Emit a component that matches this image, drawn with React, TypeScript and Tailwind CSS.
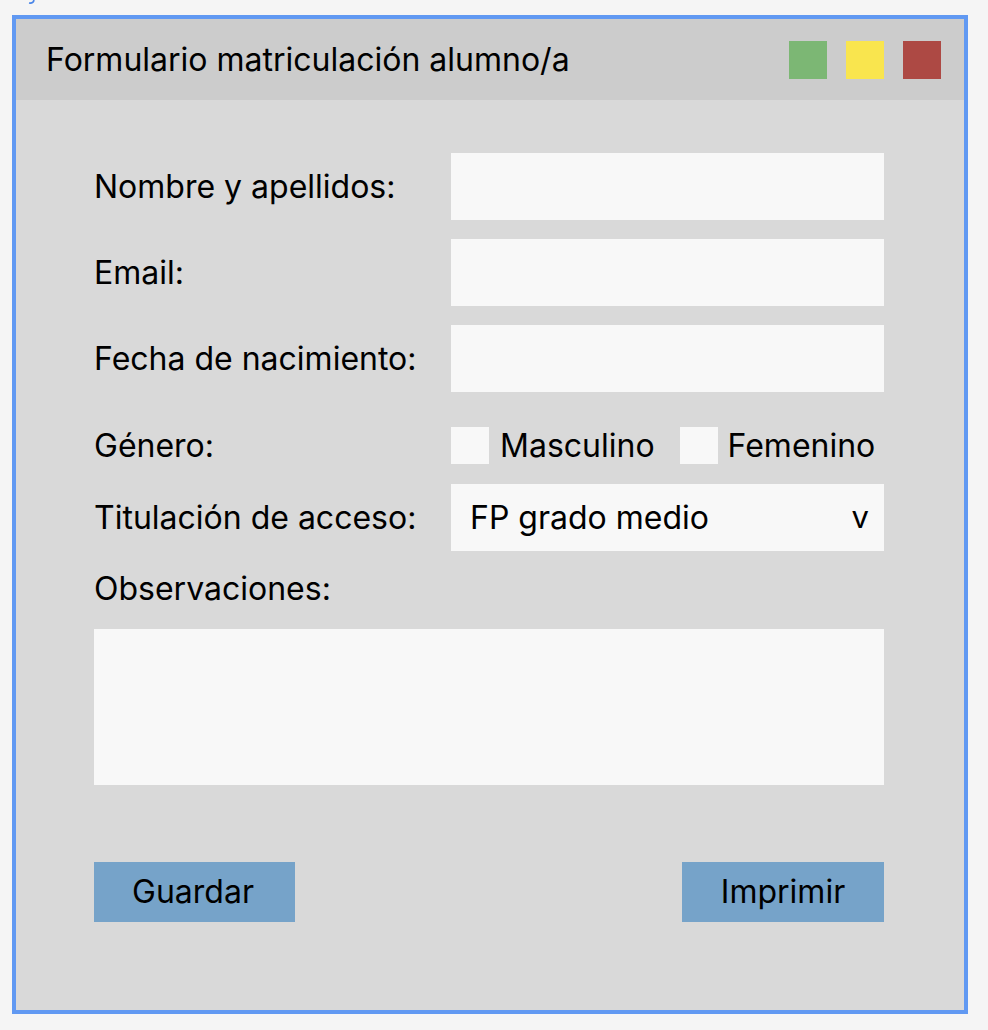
export default function App() {
  return (
    <div className="min-h-screen w-full bg-[#f5f5f5] font-['Inter','Noto_Sans',sans-serif] text-black">
      <div className="h-[15px] pl-[27px]">
        <svg width="8" height="5" viewBox="0 0 8 5" className="block">
          <path d="M7 0 C6.5 2.5 5 3.5 2 3" fill="none" stroke="#4a86e8" strokeWidth="1.6" />
        </svg>
      </div>
      <div className="ml-[12px] flex h-[999px] w-[956px] flex-col border-4 border-[#6199f2] bg-[#d9d9d9]">
        {/* Title bar */}
        <div className="flex h-[81px] shrink-0 items-center justify-between bg-[#cccccc] pl-[30px] pr-[23px]">
          <span className="text-[32px] leading-none">Formulario matriculación alumno/a</span>
          <div className="flex items-center gap-[19px]">
            <span className="h-[38px] w-[38px] bg-[#7cb774]" />
            <span className="h-[38px] w-[38px] bg-[#f9e54e]" />
            <span className="h-[38px] w-[38px] bg-[#ad4944]" />
          </div>
        </div>

        {/* Body */}
        <div className="flex flex-col pl-[78px] pr-[80px] pt-[53px] text-[32px]">
          <div className="flex flex-col gap-[19px]">
            <Row label="Nombre y apellidos:" />
            <Row label="Email:" />
            <Row label="Fecha de nacimiento:" />
          </div>

          <div className="mt-[35px] flex h-[37px] items-center">
            <span className="w-[357px] shrink-0">Género:</span>
            <span className="h-[37px] w-[38px] bg-[#f8f8f8]" />
            <span className="ml-[11px]">Masculino</span>
            <span className="ml-[25px] h-[37px] w-[38px] bg-[#f8f8f8]" />
            <span className="ml-[10px]">Femenino</span>
          </div>

          <div className="mt-[20px] flex items-center">
            <span className="w-[357px] shrink-0">Titulación de acceso:</span>
            <div className="flex h-[67px] flex-1 items-center justify-between bg-[#f8f8f8] pl-[19px] pr-[15px]">
              <span>FP grado medio</span>
              <span className="text-[31px]">v</span>
            </div>
          </div>

          <div className="mt-[19px] leading-[38px]">Observaciones:</div>
          <div className="mt-[21px] h-[156px] w-full bg-[#f8f8f8]" />

          <div className="mt-[77px] flex justify-between">
            <button className="flex h-[60px] w-[201px] items-center justify-center bg-[#76a3c9] pr-[3px] text-[32px]">
              Guardar
            </button>
            <button className="flex h-[60px] w-[202px] items-center justify-center bg-[#76a3c9] text-[32px]">
              Imprimir
            </button>
          </div>
        </div>
      </div>
    </div>
  );
}

function Row({ label }: { label: string }) {
  return (
    <div className="flex items-center">
      <span className="w-[357px] shrink-0">{label}</span>
      <div className="h-[67px] flex-1 bg-[#f8f8f8]" />
    </div>
  );
}
